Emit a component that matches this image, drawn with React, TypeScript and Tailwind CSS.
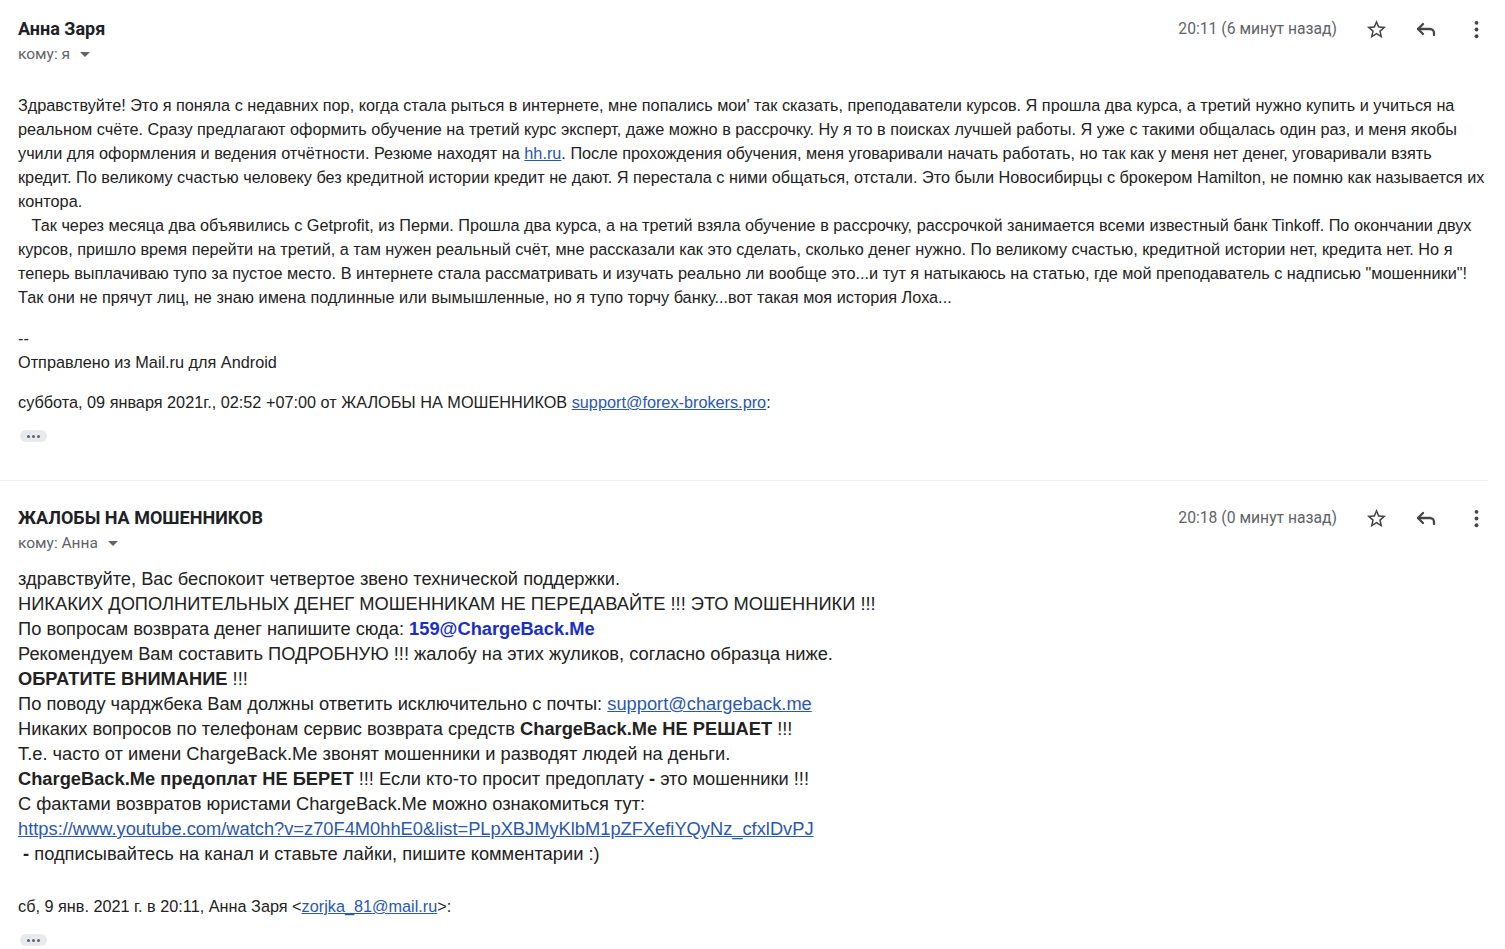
import { Reply } from 'lucide-react'

const StarIcon = () => (
  <svg viewBox="0 0 24 24" className="w-[23px] h-[23px] fill-[#444746]">
    <path d="M22 9.24l-7.19-.62L12 2 9.19 8.63 2 9.24l5.46 4.73L5.82 21 12 17.27 18.18 21l-1.63-7.03L22 9.24zM12 15.4l-3.76 2.27 1-4.28-3.32-2.88 4.38-.38L12 6.1l1.71 4.04 4.38.38-3.32 2.88 1 4.28L12 15.4z" />
  </svg>
)

const MoreIcon = () => (
  <svg viewBox="0 0 24 24" className="w-[23px] h-[23px] fill-[#444746]">
    <circle cx="12" cy="5" r="2" />
    <circle cx="12" cy="12" r="2" />
    <circle cx="12" cy="19" r="2" />
  </svg>
)

function Header({ name, to, time }: { name: string; to: string; time: string }) {
  return (
    <div className="flex items-start justify-between">
      <div>
        <div className="text-[18px] leading-[22px] font-bold text-[#202124] font-['Roboto',sans-serif]">{name}</div>
        <div className="mt-[4px] flex items-center gap-[8px] text-[15.5px] leading-[20px] text-[#5f6368] font-['Roboto',sans-serif]">
          <span>кому: {to}</span>
          <span className="ml-[2px] w-0 h-0 border-l-[5px] border-r-[5px] border-t-[5px] border-l-transparent border-r-transparent border-t-[#5f6368]" />
        </div>
      </div>
      <div className="flex items-center h-[22px]">
        <span className="text-[15.7px] text-[#5f6368] font-['Roboto',sans-serif] mr-[14px]">{time}</span>
        <div className="w-[50px] flex justify-center"><StarIcon /></div>
        <div className="w-[50px] flex justify-center"><Reply className="w-[24px] h-[24px] text-[#444746]" strokeWidth={2.3} /></div>
        <div className="w-[50px] flex justify-center"><MoreIcon /></div>
      </div>
    </div>
  )
}

const Dots = () => (
  <div className="w-[27px] h-[12px] rounded-[6px] bg-[#e8eaed] flex items-center justify-center gap-[2px] ml-[2px]">
    <span className="w-[3px] h-[3px] rounded-full bg-[#5f6368]" />
    <span className="w-[3px] h-[3px] rounded-full bg-[#5f6368]" />
    <span className="w-[3px] h-[3px] rounded-full bg-[#5f6368]" />
  </div>
)

const firstLines = [
  "Здравствуйте! Это я поняла с недавних пор, когда стала рыться в интернете, мне попались мои' так сказать, преподаватели курсов. Я прошла два курса, а третий нужно купить и учиться на",
  'реальном счёте. Сразу предлагают оформить обучение на третий курс эксперт, даже можно в рассрочку. Ну я то в поисках лучшей работы. Я уже с такими общалась один раз, и меня якобы',
]

const secondLines = [
  'кредит. По великому счастью человеку без кредитной истории кредит не дают. Я перестала с ними общаться, отстали. Это были Новосибирцы с брокером Hamilton, не помню как называется их',
  'контора.',
  '\u00a0\u00a0\u00a0Так через месяца два объявились с Getprofit, из Перми. Прошла два курса, а на третий взяла обучение в рассрочку, рассрочкой занимается всеми известный банк Tinkoff. По окончании двух',
  'курсов, пришло время перейти на третий, а там нужен реальный счёт, мне рассказали как это сделать, сколько денег нужно. По великому счастью, кредитной истории нет, кредита нет. Но я',
  'теперь выплачиваю тупо за пустое место. В интернете стала рассматривать и изучать реально ли вообще это...и тут я натыкаюсь на статью, где мой преподаватель с надписью "мошенники"!',
  'Так они не прячут лиц, не знаю имена подлинные или вымышленные, но я тупо торчу банку...вот такая моя история Лоха...',
]

const link = 'text-[#2a58b0] underline'

export default function App() {
  return (
    <div className="min-h-screen bg-white w-[1501px]">
      {/* first message */}
      <div className="pl-[18px] pt-[18px] pb-[38px]">
        <Header name="Анна Заря" to="я" time="20:11 (6 минут назад)" />
        <div className="mt-[29px] text-[16.25px] leading-[24px] text-[#222] font-['Liberation_Sans',Arial,sans-serif] whitespace-nowrap">
          {firstLines.map((l) => <div key={l}>{l}</div>)}
          <div>
            учили для оформления и ведения отчётности. Резюме находят на <span className={link}>hh.ru</span>. После прохождения обучения, меня уговаривали начать работать, но так как у меня нет денег, уговаривали взять
          </div>
          {secondLines.map((l) => <div key={l}>{l}</div>)}
          <div className="mt-[17px]">--</div>
          <div>Отправлено из Mail.ru для Android</div>
          <div className="mt-[16px]">
            суббота, 09 января 2021г., 02:52 +07:00 от ЖАЛОБЫ НА МОШЕННИКОВ <span className={link}>support@forex-brokers.pro</span>:
          </div>
          <div className="mt-[16px]"><Dots /></div>
        </div>
      </div>

      <div className="border-t border-[#eceff1] mr-[13px]" />

      {/* second message */}
      <div className="pl-[18px] pt-[26px]">
        <Header name="ЖАЛОБЫ НА МОШЕННИКОВ" to="Анна" time="20:18 (0 минут назад)" />
        <div className="mt-[13px] text-[18.3px] leading-[25px] text-[#222] font-['Liberation_Sans',Arial,sans-serif] whitespace-nowrap">
          <div>здравствуйте, Вас беспокоит четвертое звено технической поддержки.</div>
          <div>НИКАКИХ ДОПОЛНИТЕЛЬНЫХ ДЕНЕГ МОШЕННИКАМ НЕ ПЕРЕДАВАЙТЕ !!! ЭТО МОШЕННИКИ !!!</div>
          <div>По вопросам возврата денег напишите сюда: <b className="text-[#1a2fc8]">159@ChargeBack.Me</b></div>
          <div>Рекомендуем Вам составить ПОДРОБНУЮ !!! жалобу на этих жуликов, согласно образца ниже.</div>
          <div><b>ОБРАТИТЕ ВНИМАНИЕ</b> !!!</div>
          <div>По поводу чарджбека Вам должны ответить исключительно с почты: <span className={link}>support@chargeback.me</span></div>
          <div>Никаких вопросов по телефонам сервис возврата средств <b>ChargeBack.Me НЕ РЕШАЕТ</b> !!!</div>
          <div>Т.е. часто от имени ChargeBack.Me звонят мошенники и разводят людей на деньги.</div>
          <div><b>ChargeBack.Me предоплат НЕ БЕРЕТ</b> !!! Если кто-то просит предоплату <b>-</b> это мошенники !!!</div>
          <div>С фактами возвратов юристами ChargeBack.Me можно ознакомиться тут:</div>
          <div><span className={link}>https://www.youtube.com/watch?v=z70F4M0hhE0&amp;list=PLpXBJMyKlbM1pZFXefiYQyNz_cfxlDvPJ</span></div>
          <div>&nbsp;<b>-</b> подписывайтесь на канал и ставьте лайки, пишите комментарии :)</div>
        </div>
        <div className="mt-[28px] text-[16.25px] leading-[24px] text-[#222] font-['Liberation_Sans',Arial,sans-serif] whitespace-nowrap">
          сб, 9 янв. 2021 г. в 20:11, Анна Заря &lt;<span className={link}>zorjka_81@mail.ru</span>&gt;:
        </div>
        <div className="mt-[16px]"><Dots /></div>
      </div>
    </div>
  )
}
